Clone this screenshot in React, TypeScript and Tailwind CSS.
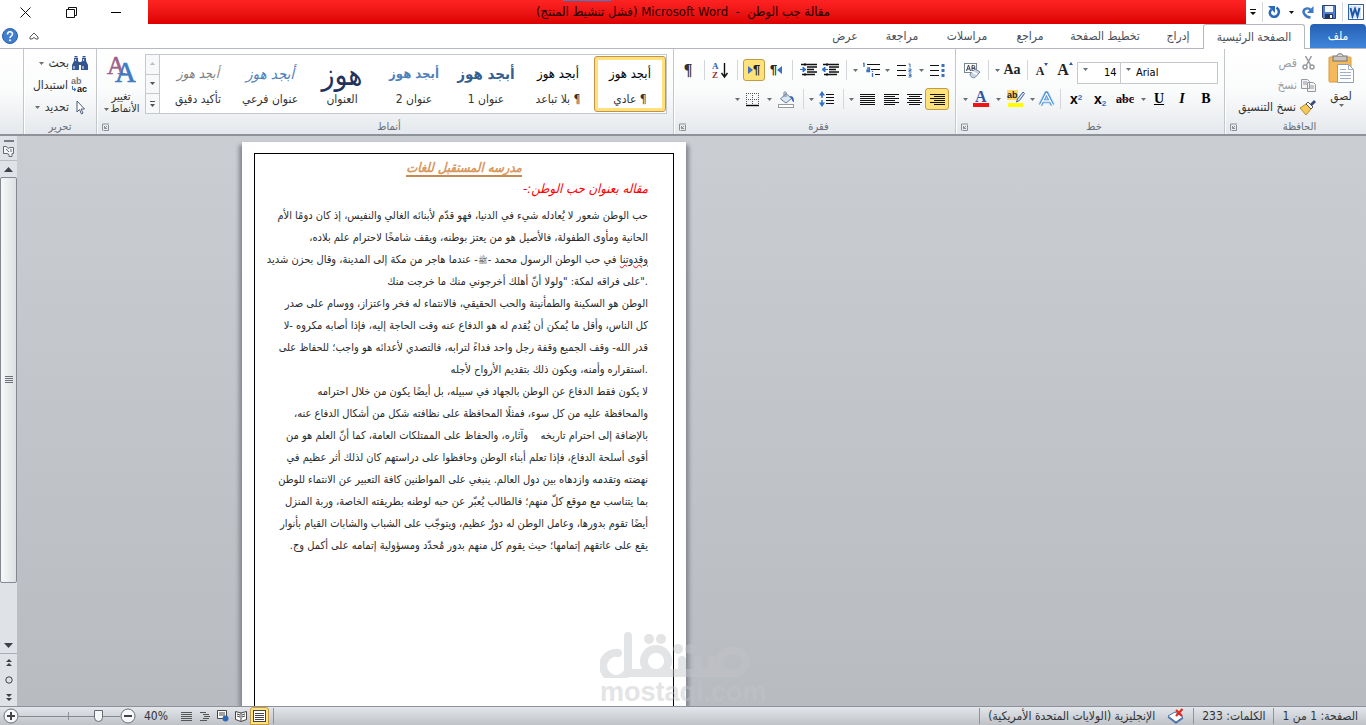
import React from "react";

type Kids = { children?: React.ReactNode };

const Caret = ({ cls = "w-2" }: { cls?: string }) => (
  <span className={`flex shrink-0 items-center justify-center ${cls}`}>
    <svg width="5" height="3" viewBox="0 0 5 3" aria-hidden="true">
      <path d="M0 0h5L2.500 3z" fill="#6b6f75" />
    </svg>
  </span>
);

const Sep = ({ cls = "w-2" }: { cls?: string }) => (
  <span className={`flex h-6 shrink-0 items-center justify-center ${cls}`}>
    <span className="h-5 w-px bg-[#d3d6da]" />
  </span>
);

const Btn = ({ label, cls = "w-6", active, children }: Kids & { label: string; cls?: string; active?: boolean }) => (
  <button
    type="button"
    aria-label={label}
    aria-pressed={active}
    className={`flex h-[22px] shrink-0 items-center justify-center ${cls} ${
      active ? "rounded-[3px] border border-[#c29b4a] bg-[#ffe27a]" : ""
    }`}
  >
    {children}
  </button>
);

const Launcher = () => (
  <svg width="8" height="8" viewBox="0 0 8 8" fill="none" stroke="#8b9097" aria-hidden="true">
    <path d="M1.500 7.500V1H8M7.500 2v5.500H2.500M6 3L3.500 5.500M3.500 3v2.500H6" />
  </svg>
);

const Group = ({ title, cls, launcher = true, children }: Kids & { title: string; cls: string; launcher?: boolean }) => (
  <section
    aria-label={title}
    className={`flex shrink-0 flex-col border-l border-[#c3c7cc] shadow-[1px_0_0_#fff_inset] ${cls}`}
  >
    <div className="flex flex-1">{children}</div>
    <div className="flex h-[15px] items-center px-1">
      <span className="flex-1 text-center text-[11px] leading-[15px] text-[#676d78]">{title}</span>
      {launcher && (
        <button type="button" aria-label={`خيارات ${title}`}>
          <Launcher />
        </button>
      )}
    </div>
  </section>
);

const Lines = ({ rows }: { rows: [number, number][] }) => (
  <svg width="15" height="13" viewBox="0 0 15 13" aria-hidden="true" shapeRendering="crispEdges">
    {rows.map(([x, w], i) => (
      <rect key={i} x={x} y={i * 2 + 1} width={w} height="1" fill="#111" />
    ))}
  </svg>
);

const FULL: [number, number][] = [[0, 15], [0, 15], [0, 15], [0, 15], [0, 15], [0, 15]];
const RIGHT: [number, number][] = [[0, 15], [4, 11], [0, 15], [4, 11], [0, 15], [4, 11]];
const LEFT: [number, number][] = [[0, 15], [0, 11], [0, 15], [0, 11], [0, 15], [0, 11]];
const CENTER: [number, number][] = [[0, 15], [2, 11], [0, 15], [2, 11], [0, 15], [2, 11]];

const Indent = ({ inward }: { inward?: boolean }) => (
  <svg width="17" height="14" viewBox="0 0 17 14" aria-hidden="true">
    <path d="M1 1.500h16M7 4h10M7 6.500h7M7 9h10M2 11.500h13" stroke="#111" strokeWidth="1.300" />
    <path d="M5 0v14" stroke="#111" strokeDasharray="1 1" />
    <rect y="3.500" width="6" height="6" fill="#fff" />
    <path d={inward ? "M0 6.500h5M3 4l3 2.500L3 9z" : "M1 6.500h5M3 4L0 6.500 3 9z"} fill="#2f6fc4" stroke="#2f6fc4" />
  </svg>
);

const FontBar = () => (
  <Group title="خط" cls="w-[269px]">
    <div className="flex flex-1 flex-col gap-[7px] pr-[6px] pt-[10px]">
      <div className="flex h-[22px] items-center">
        <div className="relative h-[22px] w-[98px]">
          <select
            aria-label="الخط"
            dir="ltr"
            defaultValue="Arial"
            className="h-full w-full appearance-none border border-[#c5c9ce] bg-white pl-[15px] text-[11px] text-black"
          >
            <option>Arial</option>
          </select>
          <span className="pointer-events-none absolute left-1 top-[9px]"><Caret /></span>
        </div>
        <div className="relative h-[22px] w-[43px]">
          <select
            aria-label="حجم الخط"
            dir="ltr"
            defaultValue="14"
            className="h-full w-full appearance-none border border-r-0 border-[#c5c9ce] bg-white pl-[26px] text-[11px] text-black"
          >
            <option>14</option>
          </select>
          <span className="pointer-events-none absolute left-1 top-[9px]"><Caret /></span>
        </div>
        <Btn label="تكبير الخط" cls="w-6">
          <span dir="ltr" className="flex items-start font-['Liberation_Serif',serif] text-base font-bold leading-4 text-[#222]">
            A
            <svg width="4" height="3" viewBox="0 0 4 3"><path d="M0 3h4L2 0z" fill="#2c57a8" /></svg>
          </span>
        </Btn>
        <Btn label="تصغير الخط" cls="w-[22px]">
          <span dir="ltr" className="flex items-start pt-[2px] font-['Liberation_Serif',serif] text-xs font-bold leading-4 text-[#222]">
            A
            <svg width="4" height="3" viewBox="0 0 4 3"><path d="M0 0h4L2 3z" fill="#2c57a8" /></svg>
          </span>
        </Btn>
        <Sep />
        <Btn label="تغيير حالة الأحرف" cls="w-[22px]">
          <span className="font-['Liberation_Serif',serif] text-sm font-bold text-[#222]">Aa</span>
        </Btn>
        <Caret />
        <Sep cls="w-2.5" />
        <Btn label="مسح التنسيق" cls="w-[22px]">
          <svg width="17" height="17" viewBox="0 0 17 17">
            <rect x=".5" y="1.500" width="12" height="9" fill="#fff" stroke="#7d8794" />
            <path d="M2.500 9l2-6 2 6M3.300 7h2.400M8 9V3.500h1.500a1.300 1.300 0 010 2.700H8h2a1.400 1.400 0 010 2.800z" fill="none" stroke="#333a4a" />
            <path d="M6 12l5-5 5 3-5 5.500c-2 1-5-1-5-3.500z" fill="#c9d3e2" stroke="#76849b" />
            <path d="M8 9.500l5 3" stroke="#fff" strokeWidth="1.500" />
          </svg>
        </Btn>
      </div>
      <div className="flex h-[22px] items-center font-['Liberation_Serif',serif] text-sm font-bold text-black">
        <Btn label="غامق">B</Btn>
        <Btn label="مائل"><span className="italic">I</span></Btn>
        <Btn label="تسطير" cls="w-[22px]"><span className="underline">U</span></Btn>
        <Caret cls="w-2.5" />
        <Btn label="يتوسطه خط" cls="w-[26px]"><span className="text-xs leading-4 line-through decoration-[#8a3a3a]">abc</span></Btn>
        <Btn label="منخفض"><span dir="ltr" className="font-['Liberation_Sans',sans-serif]">x<sub className="text-[8px] text-[#2f6fc4]">2</sub></span></Btn>
        <Btn label="مرتفع"><span dir="ltr" className="font-['Liberation_Sans',sans-serif]">x<sup className="text-[8px] text-[#2f6fc4]">2</sup></span></Btn>
        <Sep />
        <Btn label="تأثيرات النص" cls="w-5">
          <svg width="17" height="16" viewBox="0 0 17 16" fill="none" strokeLinejoin="round">
            <path d="M2.500 14L8.500 2 14.500 14M5 10h7" stroke="#b5d6f7" strokeWidth="5" />
            <path d="M2.500 14L8.500 2 14.500 14M5 10h7" stroke="#4c8fd8" strokeWidth="3.200" />
            <path d="M2.500 14L8.500 2.500 14.500 14M5 10h7" stroke="#fff" strokeWidth="1.300" />
          </svg>
        </Btn>
        <Caret />
        <Btn label="لون تمييز النص">
          <svg direction="ltr" width="18" height="18" viewBox="0 0 18 18">
            <rect x="0" y="0" width="11" height="10" fill="#ffd75e" />
            <text x="0" y="8" fontSize="9" fontWeight="bold" fontFamily="Liberation Sans" fill="#222">ab</text>
            <path d="M16 2l1.500 1.500-5 7-3 1.500 1-3z" fill="#dfe6f0" stroke="#3d5c99" />
            <rect x="1" y="13" width="15" height="4" fill="#ff0" />
          </svg>
        </Btn>
        <Caret cls="w-3" />
        <Btn label="لون الخط" cls="w-[22px]">
          <svg direction="ltr" width="16" height="18" viewBox="0 0 16 18">
            <text x="2" y="12" fontSize="16" fontWeight="bold" fontFamily="Liberation Serif" fill="#2f55a4">A</text>
            <rect y="13" width="16" height="4" fill="#f01414" />
          </svg>
        </Btn>
        <Caret cls="w-2.5" />
      </div>
    </div>
  </Group>
);

const ParagraphBar = () => (
  <Group title="فقرة" cls="w-[282px]">
    <div className="flex flex-1 flex-col gap-[7px] pr-[6px] pt-[10px]">
      <div className="flex h-[22px] items-center">
        <Btn label="تعداد نقطي">
          <svg width="15" height="14" viewBox="0 0 15 14">
            <path d="M0 2.500h9M0 7.500h9M0 12.500h9" stroke="#111" />
            <path d="M11.500 1h3v3h-3zM11.500 6h3v3h-3zM11.500 11h3v3h-3z" fill="#3d70bd" />
          </svg>
        </Btn>
        <Caret />
        <Btn label="تعداد رقمي" cls="w-[26px]">
          <svg width="15" height="15" viewBox="0 0 15 15">
            <path d="M0 2.500h9M0 7.500h9M0 12.500h9" stroke="#111" />
            <path d="M11.500 1h1.500v3.500M11.500 6h2.500v1.500h-2v1.500h2.500M11.500 11h2.500v3h-2.500M12 12.500h2" fill="none" stroke="#3d70bd" />
          </svg>
        </Btn>
        <Caret />
        <Btn label="قائمة متعددة المستويات">
          <svg width="18" height="16" viewBox="0 0 18 16">
            <path d="M5 2.500h13M9 7.500h9M13 12.500h5" stroke="#111" />
            <path d="M1 1.500h1V5M5 6h2.500v3.500H5V8h2M10.500 11v4M10.500 9v1" fill="none" stroke="#3d70bd" strokeWidth="1.300" />
          </svg>
        </Btn>
        <Caret />
        <Sep cls="w-2.5" />
        <Btn label="إنقاص المسافة البادئة" cls="w-[22px]"><Indent /></Btn>
        <Btn label="زيادة المسافة البادئة" cls="w-[22px]"><Indent inward /></Btn>
        <Sep cls="w-2.5" />
        <Btn label="من اليسار إلى اليمين" cls="w-[22px]">
          <span className="flex items-center font-['Liberation_Sans',sans-serif] text-[13px] font-bold text-[#222]" dir="ltr">
            ¶<svg width="5" height="8" viewBox="0 0 5 8"><path d="M5 0v8L0 4z" fill="#3d70bd" /></svg>
          </span>
        </Btn>
        <Btn label="من اليمين إلى اليسار" cls="w-[22px]" active>
          <span className="flex items-center font-['Liberation_Sans',sans-serif] text-[13px] font-bold text-[#222]" dir="ltr">
            <svg width="5" height="8" viewBox="0 0 5 8"><path d="M0 0v8l5-4z" fill="#3d70bd" /></svg>¶
          </span>
        </Btn>
        <Sep cls="w-3" />
        <Btn label="فرز" cls="w-[22px]">
          <svg direction="ltr" width="17" height="17" viewBox="0 0 17 17">
            <text x="0" y="7" fontSize="9" fontWeight="bold" fontFamily="Liberation Serif" fill="#2f5fb0">A</text>
            <text x="0" y="16" fontSize="9" fontWeight="bold" fontFamily="Liberation Serif" fill="#8e3440">Z</text>
            <path d="M12.500 1v13M9.500 11l3 4 3-4" fill="none" stroke="#111" strokeWidth="1.400" />
          </svg>
        </Btn>
        <Sep cls="w-2.5" />
        <Btn label="إظهار علامات الفقرة" cls="w-[22px]">
          <span className="font-['Liberation_Serif',serif] text-base font-bold leading-5 text-[#333]">¶</span>
        </Btn>
      </div>
      <div className="flex h-[22px] items-center">
        <Btn label="محاذاة لليمين" active><Lines rows={RIGHT} /></Btn>
        <Btn label="توسيط" cls="w-[22px]"><Lines rows={CENTER} /></Btn>
        <Btn label="محاذاة لليسار"><Lines rows={LEFT} /></Btn>
        <Btn label="ضبط"><Lines rows={FULL} /></Btn>
        <Caret />
        <Sep />
        <Btn label="تباعد الأسطر">
          <svg width="16" height="16" viewBox="0 0 16 16">
            <path d="M7 3.500h8M7 6.500h8M7 9.500h8M7 12.500h8" stroke="#111" />
            <path d="M3 4v8" stroke="#2f6fc4" strokeWidth="1.500" strokeDasharray="3 2" />
            <path d="M0 4.500L3 0l3 4.500zM0 11.500L3 16l3-4.500z" fill="#2f6fc4" />
          </svg>
        </Btn>
        <Caret />
        <Sep />
        <Btn label="تظليل" cls="w-[26px]">
          <svg width="17" height="17" viewBox="0 0 17 17">
            <path d="M2.500 8L8 2.500l5.500 5L8 12z" fill="#dbe6f5" stroke="#6c7e99" />
            <path d="M6 6V1.500c0-1 2-1 2 0V6" fill="none" stroke="#6c7e99" />
            <path d="M12 5c3 0 4 2 4 6-1 0-2-1-2.500-3z" fill="#2f66b5" />
            <rect x=".5" y="13.500" width="15" height="3" fill="#fff" stroke="#999" />
          </svg>
        </Btn>
        <Caret />
        <Btn label="حدود">
          <svg width="14" height="15" viewBox="0 0 14 15">
            <path d="M.5 1v12M6.500 1v12M12.500 1v12M0 1.500h13M0 7.500h13" stroke="#555" strokeDasharray="1 1" />
            <path d="M0 13.500h13" stroke="#000" strokeWidth="1.400" />
          </svg>
        </Btn>
        <Caret />
      </div>
    </div>
  </Group>
);

const STYLES = [
  { name: "¶ عادي", sample: "أبجد هوز", cls: "text-[13px] text-black", active: true },
  { name: "¶ بلا تباعد", sample: "أبجد هوز", cls: "text-[13px] text-black" },
  { name: "عنوان 1", sample: "أبجد هوز", cls: "text-[15px] font-bold text-[#365f91]" },
  { name: "عنوان 2", sample: "أبجد هوز", cls: "text-[13px] font-bold text-[#4f81bd]" },
  { name: "العنوان", sample: "هوز", cls: "text-[30px] text-[#22325c]" },
  { name: "عنوان فرعي", sample: "أبجد هوز", cls: "text-[15px] italic text-[#4f81bd]" },
  { name: "تأكيد دقيق", sample: "أبجد هوز", cls: "text-[13px] italic text-[#808080]" },
];

const StylesBar = () => (
  <Group title="أنماط" cls="w-[577px]">
    <div className="flex flex-1 pr-[6px] pt-[5px]">
      <div className="flex h-[60px] w-[508px] border border-[#c5c9ce] bg-white">
        {STYLES.map((s) => (
          <button
            key={s.name}
            type="button"
            className={`flex w-[72px] shrink-0 flex-col items-center overflow-hidden whitespace-nowrap ${
              s.active ? "my-px rounded-[3px] border border-[#c2934a] p-0 shadow-[inset_0_0_0_3px_#ffe07a]" : "py-0.5"
            }`}
          >
            <span className={`flex h-[34px] items-center ${s.cls}`}>{s.sample}</span>
            <span className="text-xs leading-4 text-[#333]">{s.name}</span>
          </button>
        ))}
      </div>
      <div className="flex h-[60px] w-[14px] flex-col border border-r-0 border-[#c5c9ce] bg-[#f7f8f9]">
        {["لأعلى", "لأسفل", "المزيد"].map((t, i) => (
          <button key={t} type="button" aria-label={t} className="flex flex-1 items-center justify-center border-b border-[#c5c9ce] last:border-b-0">
            <svg width="5" height="6" viewBox="0 0 5 6">
              {i === 0 && <path d="M0 4h5L2.500 1z" fill="#b9bdc2" />}
              {i === 1 && <path d="M0 1h5L2.500 4z" fill="#555" />}
              {i === 2 && <path d="M0 0h5v1H0zM0 3h5L2.500 6z" fill="#555" />}
            </svg>
          </button>
        ))}
      </div>
      <button type="button" className="flex flex-1 flex-col items-center text-[11px] leading-3 text-[#333]">
        <svg direction="ltr" width="30" height="30" viewBox="0 0 30 30" aria-hidden="true">
          <text x="1" y="20" fontSize="25" fontFamily="Liberation Serif" fill="#9c6088" stroke="#9c6088" strokeWidth=".5">A</text>
          <text x="9" y="28" fontSize="29" fontFamily="Liberation Serif" fill="#3c7cc4" stroke="#3c7cc4" strokeWidth=".7">A</text>
        </svg>
        <span className="pt-[7px]">تغيير</span>
        <span className="flex">الأنماط<Caret /></span>
      </button>
    </div>
  </Group>
);

const Binoculars = () => (
  <svg width="16" height="15" viewBox="0 0 16 15" aria-hidden="true">
    <path d="M2 2h4v3l1 1h2l1-1V2h4v3l2 4v5H9V9H7v5H0V9l2-4z" fill="#34558f" />
    <path d="M2.500 0h3v1.500h-3zM10.500 0h3v1.500h-3z" fill="#34558f" />
    <path d="M2 10v3M11 10v3M3.500 3v2M11.500 3v2" stroke="#c9d8ee" strokeWidth="1.300" />
  </svg>
);

const Ribbon = () => (
  <div className="flex h-[85px] shrink-0 overflow-hidden bg-linear-to-b from-white via-[#fafbfb] to-[#e5e8ec]">
    <Group title="الحافظة" cls="w-[142px]">
      <button type="button" className="flex w-[50px] flex-col items-center pt-1 text-xs leading-4 text-[#333]">
        <svg width="28" height="31" viewBox="0 0 28 31" aria-hidden="true">
          <rect x="2" y="4" width="22" height="25" rx="1" fill="#f3b95b" stroke="#d99a3d" />
          <rect x="6" y="3" width="14" height="5" fill="#c7c4c0" stroke="#77736e" />
          <path d="M10 3c0-3 6-3 6 0" fill="#ddd" stroke="#77736e" />
          <path d="M10.500 11.500h11l5 5v13h-16z" fill="#fff" stroke="#8ea0b8" />
          <path d="M21.500 11.500v5h5M13 16.500h6M13 19.500h11M13 22.500h11M13 25.500h11" fill="none" stroke="#9fb0c8" />
        </svg>
        <span className="pt-1">لصق</span>
        <Caret />
      </button>
      <div className="flex flex-col items-start pt-[3px] text-xs text-[#9a9ea4]">
        <button type="button" className="flex h-[22px] items-center gap-1">
          <svg width="15" height="14" viewBox="0 0 15 14" fill="none" stroke="#969a9f" strokeWidth="1.500" aria-hidden="true">
            <path d="M4.500 0l5 9M10.500 0l-5 9" /><circle cx="4" cy="11" r="2" /><circle cx="11" cy="11" r="2" />
          </svg>
          قص
        </button>
        <button type="button" className="flex h-[22px] items-center gap-1">
          <svg width="15" height="13" viewBox="0 0 15 13" fill="#f2f3f4" stroke="#969a9f" aria-hidden="true">
            <path d="M.5.5h6l2 2v7h-8zM6.500 3.500h6l2 2v7h-8z" /><path d="M2 3h4M2 5h4M8 7h5M8 9h5" />
          </svg>
          نسخ
        </button>
        <button type="button" className="flex h-[22px] items-center gap-1 text-[#333]">
          <svg width="16" height="15" viewBox="0 0 16 15" aria-hidden="true">
            <path d="M0 8l6-4 5 5-5 6z" fill="#f6c95c" stroke="#b98a2f" /><path d="M6 4l2-2 5 5-2 2z" fill="#fff" stroke="#555" /><path d="M10 4l4-4 2 2-4 4z" fill="#3a4c7e" />
          </svg>
          نسخ التنسيق
        </button>
      </div>
    </Group>
    <FontBar />
    <ParagraphBar />
    <StylesBar />
    <Group title="تحرير" cls="w-[73px]" launcher={false}>
      <div className="flex flex-col items-start pr-2 pt-[3px] text-xs text-[#333]">
        <button type="button" className="flex h-[22px] items-center gap-[3px] whitespace-nowrap"><Binoculars />بحث<Caret /></button>
        <button type="button" className="flex h-[22px] items-center gap-[3px] whitespace-nowrap">
          <svg direction="ltr" width="17" height="16" viewBox="0 0 17 16" aria-hidden="true">
            <text x="0" y="7" fontSize="9" fontFamily="Liberation Sans" fontWeight="bold" fill="#777">ab</text>
            <text x="6" y="15" fontSize="9" fontFamily="Liberation Sans" fontWeight="bold" fill="#111">ac</text>
            <path d="M1.500 9v3.500h3M3 11l2 1.500L3 14" fill="none" stroke="#3d70bd" />
          </svg>
          استبدال
        </button>
        <button type="button" className="flex h-[22px] items-center gap-[3px] whitespace-nowrap">
          <svg width="16" height="15" viewBox="0 0 16 15" aria-hidden="true">
            <path d="M5 1v11l2.500-2.500L9.500 14l1.500-1-2-4h3.500z" fill="#fff" stroke="#4d5d7c" />
          </svg>
          تحديد<Caret />
        </button>
      </div>
    </Group>
  </div>
);

const TABS = [
  { t: "إدراج", c: "w-[50px]" },
  { t: "تخطيط الصفحة", c: "w-[96px]" },
  { t: "مراجع", c: "w-[54px]" },
  { t: "مراسلات", c: "w-[72px]" },
  { t: "مراجعة", c: "w-[58px]" },
  { t: "عرض", c: "w-[56px]" },
];

const Tabs = () => (
  <nav className="flex h-[25px] shrink-0 items-stretch border-b border-[#b4b8be] bg-white text-xs text-[#4a4f57]">
    <button type="button" className="w-14 rounded-t-sm bg-linear-to-b from-[#2660b4] to-[#3f86dc] text-white">ملف</button>
    <button type="button" aria-current="page" className="z-10 -mb-px mr-[5px] w-[102px] whitespace-nowrap rounded-t-[3px] border border-b-0 border-[#b4b8be] bg-white">
      الصفحة الرئيسية
    </button>
    {TABS.map((x) => (
      <button key={x.t} type="button" className={`whitespace-nowrap ${x.c}`}>{x.t}</button>
    ))}
    <span className="flex-1" />
    <button type="button" aria-label="تصغير الشريط" className="w-7">
      <svg className="mx-auto" width="10" height="8" viewBox="0 0 10 8" fill="#fff" stroke="#555"><path d="M1 5l4-4 4 4v2H7L5 5.500 3 7H1z" /></svg>
    </button>
    <button type="button" aria-label="تعليمات" className="flex w-5 items-center justify-center">
      <svg width="16" height="16" viewBox="0 0 16 16">
        <circle cx="8" cy="8" r="7.500" fill="#3f7fce" stroke="#2c5ea8" />
        <path d="M5.500 6.500C5.500 3 10.500 3 10.500 6c0 2-2.500 2-2.500 4" fill="none" stroke="#fff" strokeWidth="1.600" />
        <circle cx="8" cy="12.200" r="1" fill="#fff" />
      </svg>
    </button>
  </nav>
);

const TitleBar = () => (
  <header className="flex h-6 shrink-0 items-stretch bg-white">
    <div className="flex w-[120px] items-center pr-0.5">
      <svg className="shrink-0" width="16" height="16" viewBox="0 0 16 16" aria-hidden="true">
        <rect x=".5" y=".5" width="15" height="15" fill="#fff" stroke="#2f62a8" />
        <rect x="1" y="2" width="12" height="12" fill="#d9e7f8" />
        <path d="M2.500 4l2 8L7 5l2.500 7 2-8" fill="none" stroke="#1f57a5" strokeWidth="2" />
      </svg>
      <Sep cls="w-3" />
      <button type="button" aria-label="حفظ">
        <svg width="14" height="14" viewBox="0 0 14 14">
          <path d="M.5.5h13v13h-12l-1-1z" fill="#4f7fd0" stroke="#2c4178" /><rect x="3" y="1" width="8" height="6" fill="#f3f6fb" /><rect x="3" y="9" width="8" height="5" fill="#26345c" /><rect x="8" y="10" width="2" height="3" fill="#fff" />
        </svg>
      </button>
      <button type="button" aria-label="إعادة" className="mr-2">
        <svg width="12" height="14" viewBox="0 0 12 14"><path d="M8.500 12.500C3 12 0 7 2.500 4.500 4.500 3 7 3 8.500 5" fill="none" stroke="#3c78c4" strokeWidth="2.500" /><path d="M11.500 1v7H5z" fill="#3c78c4" /></svg>
      </button>
      <svg className="mr-2 shrink-0" width="5" height="3" viewBox="0 0 5 3"><path d="M0 0h5L2.500 3z" fill="#111" /></svg>
      <button type="button" aria-label="تراجع" className="mr-2">
        <svg width="13" height="14" viewBox="0 0 13 14"><path d="M8.500 2.500c5 4 1 10.500-4 9C1 10 1 6.500 3.500 4.500" fill="none" stroke="#2b69bb" strokeWidth="2.500" /><path d="M0 1h7v7z" fill="#2b69bb" /></svg>
      </button>
      <Sep cls="w-3" />
      <svg className="shrink-0" width="6" height="6" viewBox="0 0 6 6"><path d="M0 0h6v1H0zM0 3h6L3 6z" fill="#111" /></svg>
    </div>
    <div className="relative flex flex-1 items-center justify-center bg-linear-to-b from-[#ff2323] to-[#dc0000] pr-7 text-[13px] text-[#2a0000]">
      <span className="absolute left-[415px] top-0 h-px w-12 bg-[#3b7fd0]" />
      <h1 className="whitespace-pre">مقالة جب الوطن  -  Microsoft Word (فشل تنشيط المنتج)</h1>
    </div>
    <div className="flex w-[148px] items-center">
      <button type="button" aria-label="تصغير" className="flex w-[64px] justify-center"><span className="h-px w-2.5 bg-black" /></button>
      <button type="button" aria-label="استعادة" className="flex w-[26px] justify-center">
        <svg width="11" height="11" viewBox="0 0 11 11" fill="none" stroke="#111"><path d="M.5 2.500h8v8h-8zM2.500 2V.5h8v8H9" /></svg>
      </button>
      <button type="button" aria-label="إغلاق" className="flex flex-1 justify-center pr-2">
        <svg width="11" height="11" viewBox="0 0 11 11" stroke="#111"><path d="M.5.5l10 10M10.500.5l-10 10" /></svg>
      </button>
    </div>
  </header>
);

type Line = string | { t: React.ReactNode; ltr?: boolean };

const PARAS: Line[][] = [
  [
    "حب الوطن شعور لا يُعادله شيء في الدنيا، فهو قدّم لأبنائه الغالي والنفيس، إذ كان دومًا الأم",
    "الحانية ومأوى الطفولة، فالأصيل هو من يعتز بوطنه، ويقف شامخًا لاحترام علم بلاده،",
    {
      t: (
        <>
          <span className="underline decoration-[#f00] decoration-wavy decoration-1">وقدوتنا</span>
          {" في حب الوطن الرسول محمد -"}
          <span className="text-[8px]">ﷺ</span>
          {"- عندما هاجر من مكة إلى المدينة، وقال بحزن شديد"}
        </>
      ),
    },
    { t: "على فراقه لمكة: \"ولولا أنّ أهلك أخرجوني منك ما خرجت منك\".", ltr: true },
  ],
  [
    "الوطن هو السكينة والطمأنينة والحب الحقيقي، فالانتماء له فخر واعتزاز، ووسام على صدر",
    "كل الناس، وأقل ما يُمكن أن يُقدم له هو الدفاع عنه وقت الحاجة إليه، فإذا أصابه مكروه -لا",
    "قدر الله- وقف الجميع وقفة رجل واحد فداءً لترابه، فالتصدي لأعدائه هو واجب؛ للحفاظ على",
    { t: "استقراره وأمنه، ويكون ذلك بتقديم الأرواح لأجله.", ltr: true },
  ],
  [
    "لا يكون فقط الدفاع عن الوطن بالجهاد في سبيله، بل أيضًا يكون من خلال احترامه",
    "والمحافظة عليه من كل سوء، فمثلًا المحافظة على نظافته شكل من أشكال الدفاع عنه،",
    "بالإضافة إلى احترام تاريخه    وآثاره، والحفاظ على الممتلكات العامة، كما أنّ العلم هو من",
    "أقوى أسلحة الدفاع، فإذا تعلم أبناء الوطن وحافظوا على دراستهم كان لذلك أثر عظيم في",
    "نهضته وتقدمه وازدهاه بين دول العالم. ينبغي على المواطنين كافة التعبير عن الانتماء للوطن",
    "بما يتناسب مع موقع كلّ منهم؛ فالطالب يُعبّر عن حبه لوطنه بطريقته الخاصة، وربة المنزل",
    "أيضًا تقوم بدورها، وعامل الوطن له دورٌ عظيم، ويتوجّب على الشباب والشابات القيام بأنوار",
    "يقع على عاتقهم إتمامها؛ حيث يقوم كل منهم بدور مُحدّد ومسؤولية إتمامه على أكمل وج.",
  ],
];

const Watermark = () => (
  <div dir="ltr" aria-hidden="true" className="pointer-events-none absolute bottom-0 left-[358px] w-[170px] text-[#c3c4c8] opacity-45">
    <svg width="166" height="46" viewBox="0 0 166 46" fill="none" stroke="currentColor" strokeWidth="8" strokeLinecap="round" strokeLinejoin="round">
      <path d="M18 22A13 13 0 1 0 27 42M28 5v37H130M56 42a12 12 0 1 1 .1 0M82 41V29M98 41V29M112 41V29M125 41a13 12 0 1 1 13 1h-8" className="translate-y-[-1px]" />
      <g fill="currentColor" stroke="none"><circle cx="49" cy="7" r="5" /><circle cx="61" cy="7" r="5" /><circle cx="78" cy="17" r="5" /><circle cx="90" cy="17" r="5" /></g>
    </svg>
    <p className="whitespace-nowrap font-['Liberation_Sans',sans-serif] text-[27px] font-bold leading-7">mostaql.com</p>
  </div>
);

const Page = () => (
  <article dir="rtl" className="relative mt-1.5 flex w-[444px] shrink-0 flex-col bg-white px-3 pt-[11px] shadow-[3px_3px_4px_#858a92,-3px_3px_4px_#858a92]">
    <div className="flex-1 border border-b-0 border-black px-[25px] pt-1">
      <h2 className="text-center text-[13px] font-bold italic leading-5 text-[#d79a63]">
        <span className="border-b-2 border-[#c58a52]">مدرسه المستقبل للغات</span>
      </h2>
      <h3 className="text-[13px] italic leading-[22px] text-[#f00]">مقاله بعنوان حب الوطن:-</h3>
      <div className="pt-[5px] text-[11px] leading-[22px] text-[#2a2a2a]">
        {PARAS.map((p, i) => (
          <p key={i}>
            {p.map((l, j) => {
              const line = typeof l === "string" ? { t: l, ltr: false } : l;
              return (
                <span key={j} dir={line.ltr ? "ltr" : "rtl"} className="block h-[22px] whitespace-pre text-right">
                  {line.t}
                </span>
              );
            })}
          </p>
        ))}
      </div>
    </div>
    <Watermark />
  </article>
);

const ScrollRail = () => (
  <aside className="flex w-[17px] shrink-0 flex-col items-center bg-[#dfe3e7] text-[#3d4248]">
    <span className="mt-1 h-0.5 w-2.5 shrink-0 bg-[#777c82]" />
    <button type="button" aria-label="المسطرة" className="flex h-[19px] w-full shrink-0 items-center justify-center border-b border-[#b9bdc2]">
      <svg width="13" height="13" viewBox="0 0 13 13" fill="#f4f5f6" stroke="#666b72"><path d="M1.500 1.500h3l1.500 2 2-1h3.500v6h-1.500v3h-3v-2l-2-1h-3.500zM4 4l3 3M9 4v3" /></svg>
    </button>
    <button type="button" aria-label="تمرير لأعلى" className="flex h-4 shrink-0 items-center">
      <svg width="9" height="5" viewBox="0 0 9 5"><path d="M0 5h9L4.500 0z" fill="currentColor" /></svg>
    </button>
    <div className="flex w-full flex-1 flex-col">
      <div className="flex h-[88%] items-center justify-center rounded-xs border border-[#83898f] bg-linear-to-r from-[#f7f8f9] to-[#dde0e4]">
        <svg width="8" height="8" viewBox="0 0 8 8" stroke="#6b7077"><path d="M0 .5h8M0 2.500h8M0 4.500h8M0 6.500h8" /></svg>
      </div>
    </div>
    <button type="button" aria-label="تمرير لأسفل" className="flex h-4 w-full shrink-0 items-center justify-center border-b border-[#a9adb3]">
      <svg width="9" height="5" viewBox="0 0 9 5"><path d="M0 0h9L4.500 5z" fill="currentColor" /></svg>
    </button>
    <button type="button" aria-label="الصفحة السابقة" className="flex h-[17px] items-center">
      <svg width="6" height="7" viewBox="0 0 6 7"><path d="M0 3h6L3 0zM0 7h6L3 4z" fill="currentColor" /></svg>
    </button>
    <button type="button" aria-label="تحديد كائن الاستعراض" className="flex h-[17px] items-center">
      <svg width="8" height="8" viewBox="0 0 8 8" fill="none" stroke="currentColor"><circle cx="4" cy="4" r="3.200" /></svg>
    </button>
    <button type="button" aria-label="الصفحة التالية" className="flex h-[18px] items-center">
      <svg width="6" height="7" viewBox="0 0 6 7"><path d="M0 0h6L3 3zM0 4h6L3 7z" fill="currentColor" /></svg>
    </button>
  </aside>
);

const StatusSep = ({ cls = "mx-2" }: { cls?: string }) => <span className={`h-4 w-px bg-[#8f949a] ${cls}`} />;

const Round = ({ plus }: { plus?: boolean }) => (
  <button type="button" aria-label={plus ? "تكبير" : "تصغير"}>
    <svg width="16" height="16" viewBox="0 0 16 16">
      <circle cx="8" cy="8" r="7" fill="#f6f7f8" stroke="#6d7278" />
      <path d={plus ? "M4 8h8M8 4v8" : "M4 8h8"} stroke="#444" strokeWidth="2" />
    </svg>
  </button>
);

const StatusBar = () => (
  <footer className="flex h-[19px] shrink-0 items-center border-t border-[#8d9299] bg-linear-to-b from-[#e3e6ea] to-[#bfc3c8] text-xs text-[#2f3338]">
    <span className="pr-2">الصفحة: 1 من 1</span>
    <StatusSep />
    <span>الكلمات: 233</span>
    <StatusSep />
    <button type="button" aria-label="تدقيق">
      <svg width="18" height="16" viewBox="0 0 18 16">
        <path d="M1 8l7-4 8 5-7 5z" fill="#fff" stroke="#4b74ad" /><path d="M1 9l8 6 7-5" fill="none" stroke="#4b74ad" strokeWidth="1.500" />
        <path d="M9 2l6 6M15.500 1L9 8" stroke="#e02b20" strokeWidth="2.200" />
      </svg>
    </button>
    <span className="pr-3">الإنجليزية (الولايات المتحدة الأمريكية)</span>
    <StatusSep />
    <span className="flex-1" />
    <StatusSep cls="ml-1" />
    <button type="button" aria-label="تخطيط الطباعة" aria-pressed="true" className="flex h-[18px] w-[19px] items-center justify-center rounded-t-[3px] border border-[#c29b4a] bg-[#ffe27a]">
      <svg width="13" height="12" viewBox="0 0 13 12"><rect x=".5" y=".5" width="12" height="11" fill="#fff" stroke="#444" /><path d="M2 3.500h9M2 5.500h9M2 7.500h9M2 9.500h9" stroke="#444" /></svg>
    </button>
    <Btn label="القراءة" cls="w-[18px]">
      <svg width="12" height="11" viewBox="0 0 12 11" fill="#fff" stroke="#444"><path d="M.5.5L6 2l5.500-1.500v8L6 10.500.5 8.500zM6 2v8M2 3l3 1M2 5l3 1M10 3L7 4M10 5L7 6" /></svg>
    </Btn>
    <Btn label="ويب" cls="w-[18px]">
      <svg width="12" height="12" viewBox="0 0 12 12"><path d="M.5.5h9v8h-9zM2 3h6M2 5h6" fill="#fff" stroke="#444" /><circle cx="8.500" cy="8.500" r="3" fill="#2d68b8" /></svg>
    </Btn>
    <Btn label="مخطط تفصيلي" cls="w-[18px]">
      <svg width="10" height="11" viewBox="0 0 10 11" stroke="#555"><path d="M0 1.500h6M3 3.500h6M4 5.500h6M3 7.500h6M0 9.500h7" /></svg>
    </Btn>
    <Btn label="مسودة" cls="w-5">
      <svg width="11" height="11" viewBox="0 0 11 11" stroke="#555"><path d="M0 1.500h11M0 3.500h11M0 5.500h11M0 7.500h11M0 9.500h11" /></svg>
    </Btn>
    <span className="w-10 text-center">40%</span>
    <Round />
    <div className="relative flex h-4 w-[101px] items-center">
      <span className="absolute left-[49px] h-2 w-px bg-[#8d9299]" />
      <input
        type="range"
        aria-label="تكبير/تصغير"
        min="0"
        max="100"
        defaultValue="18"
        className="relative h-4 w-full appearance-none bg-[linear-gradient(#85898f,#85898f)] bg-[length:100%_1px] bg-center bg-no-repeat [&::-webkit-slider-thumb]:h-3 [&::-webkit-slider-thumb]:w-[9px] [&::-webkit-slider-thumb]:appearance-none [&::-webkit-slider-thumb]:rounded-b-full [&::-webkit-slider-thumb]:border [&::-webkit-slider-thumb]:border-[#666b72] [&::-webkit-slider-thumb]:bg-[#f5f6f7]"
      />
    </div>
    <span className="flex pl-[3px]"><Round plus /></span>
  </footer>
);

export default function App() {
  return (
    <div dir="rtl" className="flex h-screen flex-col overflow-hidden font-['DejaVu_Sans_Condensed','DejaVu_Sans',sans-serif]">
      <TitleBar />
      <Tabs />
      <Ribbon />
      <main dir="ltr" className="flex min-h-0 flex-1 overflow-hidden border-t-2 border-[#8f9399] bg-linear-to-b from-[#cacdd2] to-[#b8bbc0]">
        <ScrollRail />
        <div className="flex flex-1 pl-[225px]">
          <Page />
        </div>
      </main>
      <StatusBar />
    </div>
  );
}
